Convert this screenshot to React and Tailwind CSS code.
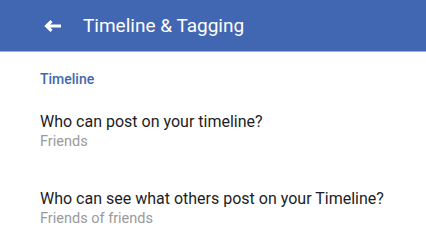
const App = () => {
  return (
    <div className="w-[426px] h-[240px] bg-white overflow-hidden" style={{ fontFamily: 'Roboto, "Noto Sans", sans-serif' }}>
      <div className="h-[52px] bg-[#4267b2] border-b border-[#9cb0d8] flex items-center">
        <div className="w-[83px] pl-[44px] pt-[1px]">
          <svg width="18" height="12" viewBox="0 0 18 12" fill="none">
            <path d="M17 6H3M7.5 1.2L2.5 6l5 4.8" stroke="#fff" strokeWidth="3" />
          </svg>
        </div>
        <h1 className="text-[19px] text-white leading-none">Timeline &amp; Tagging</h1>
      </div>

      <div className="pl-[40px]">
        <div className="pt-[18px] text-[14px] font-medium text-[#4267b2] leading-[18px]">Timeline</div>

        <div className="pt-[24px]">
          <div className="text-[16px] text-[#1d1d1f] leading-[19px]">Who can post on your timeline?</div>
          <div className="text-[14.5px] text-[#9a9a9a] leading-[21px]">Friends</div>
        </div>

        <div className="pt-[37px]">
          <div className="text-[16px] text-[#1d1d1f] leading-[19px]">Who can see what others post on your Timeline?</div>
          <div className="text-[14.5px] text-[#9a9a9a] leading-[21px]">Friends of friends</div>
        </div>
      </div>
    </div>
  );
};

export default App;
